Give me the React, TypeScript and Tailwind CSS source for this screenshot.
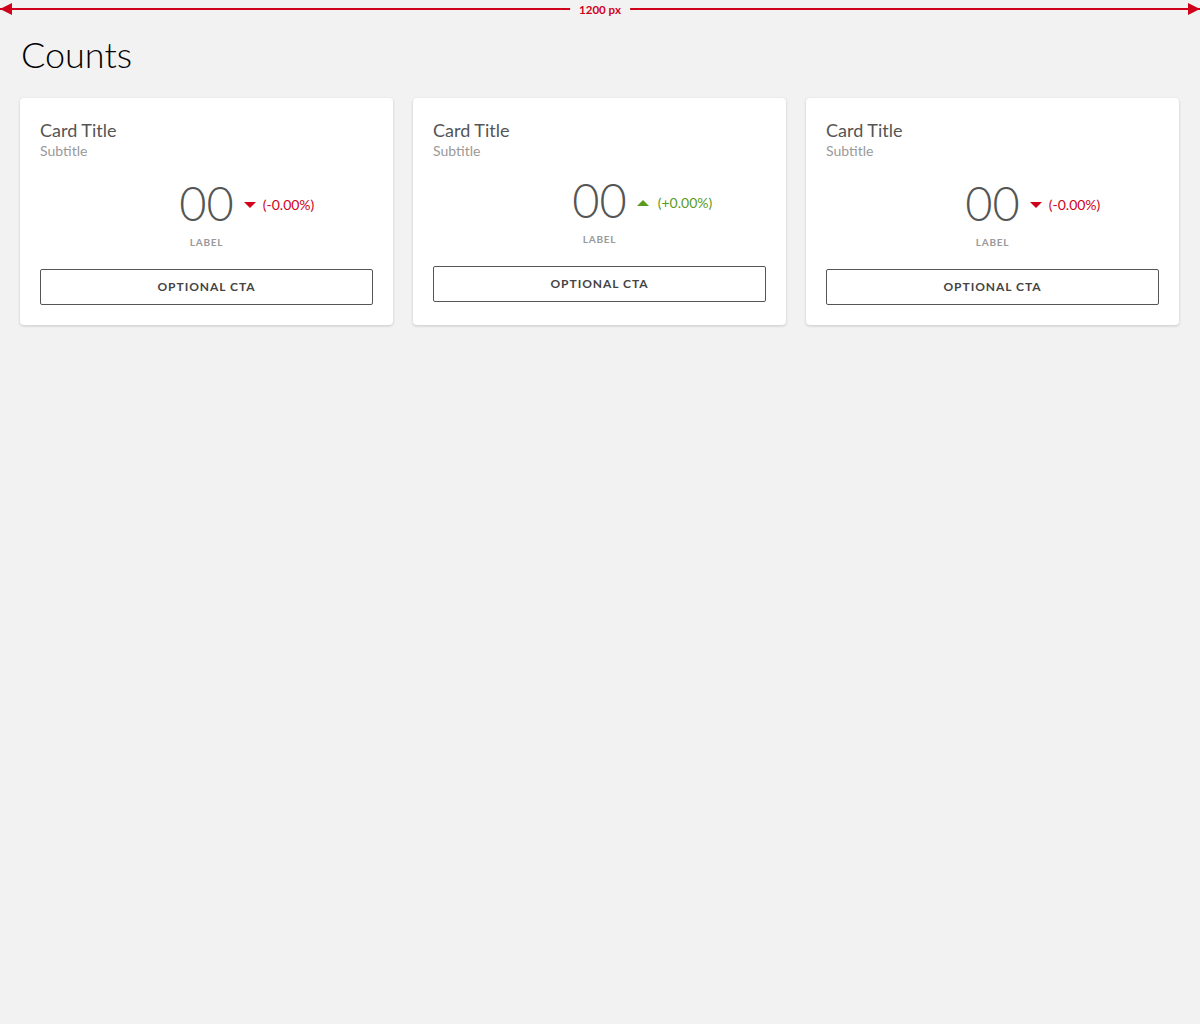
type Delta = 'up' | 'down';

const cards: { delta: Delta; value: string }[] = [
  { delta: 'down', value: '(-0.00%)' },
  { delta: 'up', value: '(+0.00%)' },
  { delta: 'down', value: '(-0.00%)' },
];

const Ruler: React.FC = () => (
  <div className="relative h-[20px] w-full">
    <div className="absolute left-0 right-0 top-[8px] h-[2px] bg-[#d0021b]" />
    <div className="absolute left-0 top-[3px] h-0 w-0 border-y-[6px] border-r-[12px] border-y-transparent border-r-[#d0021b]" />
    <div className="absolute right-0 top-[3px] h-0 w-0 border-y-[6px] border-l-[12px] border-y-transparent border-l-[#d0021b]" />
    <div className="absolute left-1/2 top-[2px] -translate-x-1/2 bg-[#f2f2f2] px-[9px] text-[11.5px] font-bold leading-[16px] text-[#d0021b]">
      1200 px
    </div>
  </div>
);

const CountCard: React.FC<{ delta: Delta; value: string }> = ({ delta, value }) => {
  const up = delta === 'up';
  return (
    <div className="rounded-[4px] bg-white px-5 pb-5 pt-[20px] shadow-[0_1px_3px_rgba(0,0,0,0.18)]">
      <div className="text-[18px] leading-[24px] text-[#555]">Card Title</div>
      <div className="text-[14px] leading-[18px] text-[#999]">Subtitle</div>

      <div className={up ? 'mt-[15px] flex flex-col items-center' : 'mt-[18px] flex flex-col items-center'}>
        <div className="relative">
          <div className="text-[47px] font-light leading-[50px] text-[#555]">00</div>
          <div
            className={
              up
                ? 'absolute left-full top-[17px] ml-[10px] flex items-center gap-[9px] whitespace-nowrap text-[14px] text-[#5a9a1f]'
                : 'absolute left-full top-[16px] ml-[10px] flex items-center gap-[7px] whitespace-nowrap text-[14px] text-[#d0021b]'
            }
          >
            {up ? (
              <span className="h-0 w-0 border-x-[6px] border-b-[6px] border-x-transparent border-b-[#5a9a1f]" />
            ) : (
              <span className="h-0 w-0 border-x-[6px] border-t-[6px] border-x-transparent border-t-[#d0021b]" />
            )}
            <span>{value}</span>
          </div>
        </div>
        <div className="mt-[7px] text-[10px] font-bold leading-[14px] tracking-[0.08em] text-[#999]">LABEL</div>
      </div>

      <button
        type="button"
        className="mt-[20px] flex h-[36px] w-full items-center justify-center rounded-[2px] border border-[#555] bg-white text-[12px] font-bold tracking-[0.08em] text-[#444]"
      >
        OPTIONAL CTA
      </button>
    </div>
  );
};

export default function App() {
  return (
    <div className="min-h-[1024px] bg-[#f2f2f2] font-['Lato',sans-serif]">
      <Ruler />
      <div className="px-5">
        <h1 className="ml-[1px] mt-[12px] text-[36px] font-light leading-[44px] text-black">Counts</h1>
        <div className="mt-[22px] grid grid-cols-[373px_373px_373px] gap-5">
          {cards.map((card, i) => (
            <CountCard key={i} delta={card.delta} value={card.value} />
          ))}
        </div>
      </div>
    </div>
  );
}
